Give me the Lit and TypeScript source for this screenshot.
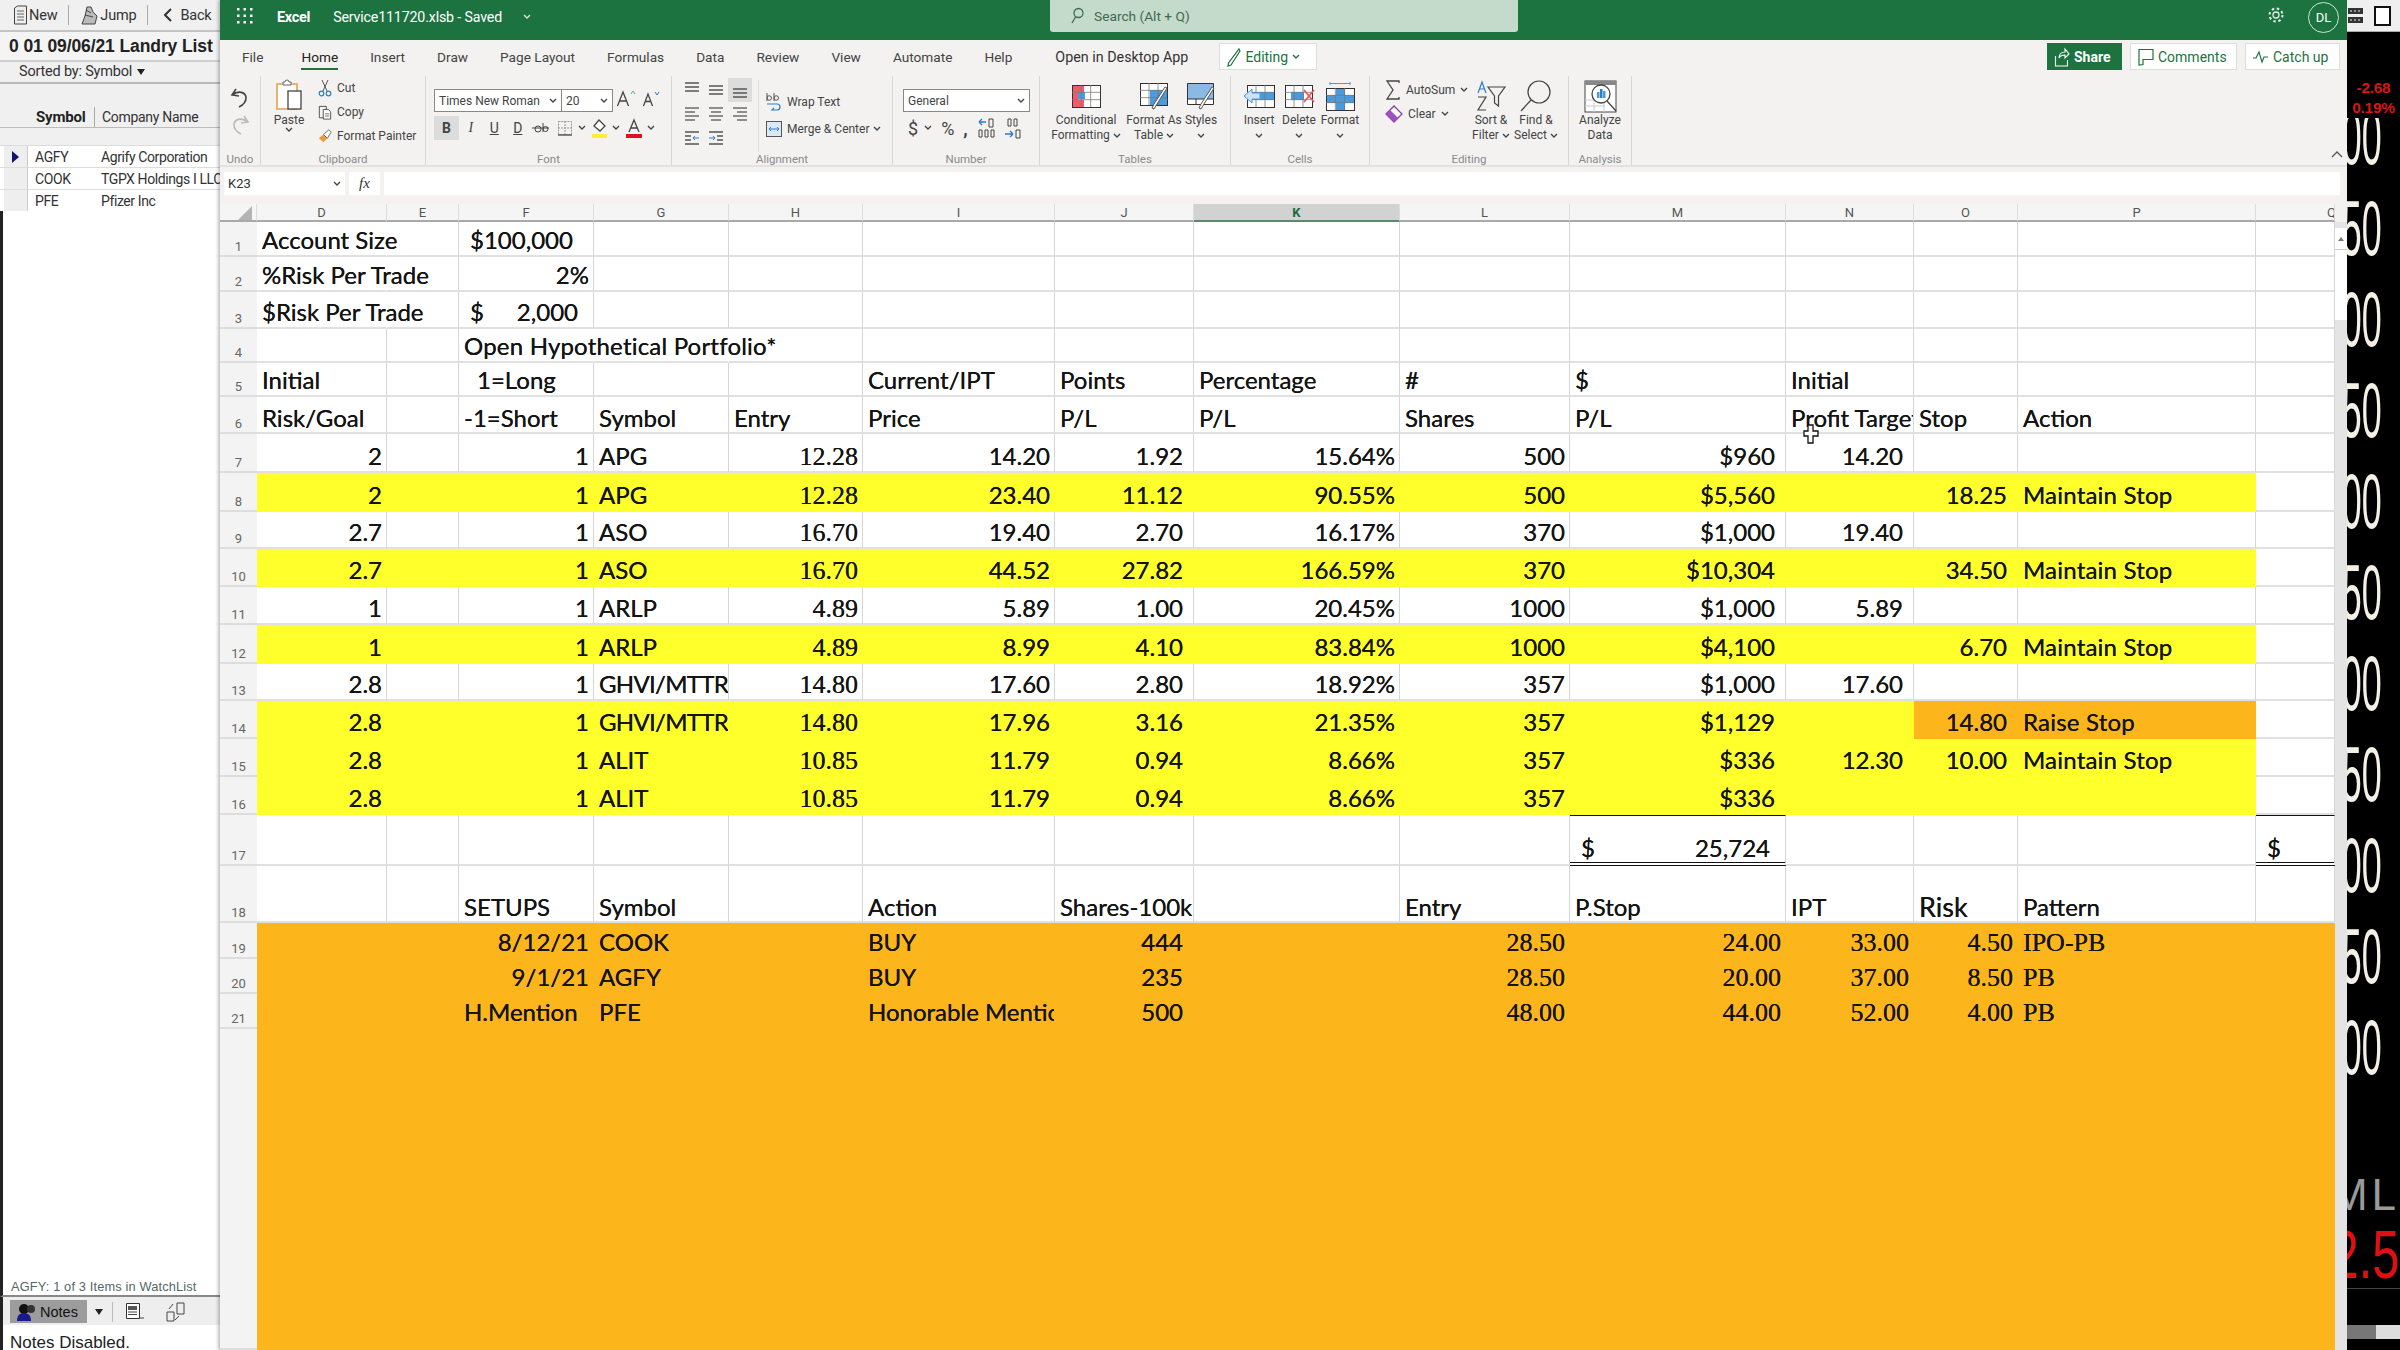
import { LitElement, html, css, svg } from 'lit';
import { customElement } from 'lit/decorators.js';

// cell = [text, classes]
type Cell = [string, string?];
type Row = { n: string; cells: Record<string, Cell> };

const COLS = ['D', 'E', 'F', 'G', 'H', 'I', 'J', 'K', 'L', 'M', 'N', 'O', 'P', 'Q'];
// these rows sit a pixel lower in their cell
const LOW_ROWS = ['6', '17', '18'];

const trade = (
  n: number, fill: string, d: string, sym: string, entry: string, cur: string, pts: string,
  pct: string, shr: string, pl: string, target: string, stop: string, action: string, actFill = '',
): Row => {
  const cells: Record<string, Cell> = {
    D: [d, 'r'], F: ['1', 'r'], G: [sym, sym.length > 6 ? 'l tight' : 'l'], H: [entry, 'r tm'], I: [cur, 'r'], J: [pts, 'rp'],
    K: [pct, 'r'], L: [shr, 'r'], M: [pl, 'rp'], N: [target, 'rp'], O: [stop, `rp ${actFill}`],
    P: [action, `l wide ${actFill}`],
  };
  for (const k of ['D', 'E', 'F', 'G', 'H', 'I', 'J', 'K', 'L', 'M', 'N', 'O', 'P']) {
    if (!cells[k]) cells[k] = ['', ''];
    if (!cells[k][1]?.includes('fo')) cells[k][1] = `${cells[k][1]} ${fill}`;
  }
  return { n: String(n), cells };
};

const setup = (n: number, f: string, fc: string, sym: string, act: string, shr: string, en: string, st: string, ipt: string, risk: string, pat: string): Row => {
  const cells: Record<string, Cell> = {
    D: ['', 'fo'], E: ['', 'fo'], F: [f, fc + ' fo'], G: [sym, 'l fo'], H: ['', 'fo'], I: [act, 'l fo'], J: [shr, 'rp fo'],
    K: ['', 'fo'], L: [en, 'r tm fo'], M: [st, 'r tm fo'], N: [ipt, 'r tm fo'], O: [risk, 'r tm fo'], P: [pat, 'l tm fo'], Q: ['', 'fo'],
  };
  return { n: String(n), cells };
};

const ROWS: Row[] = [
  { n: '1', cells: { D: ['Account Size', 'l over nob'], F: ['$100,000', 'l11'] } },
  { n: '2', cells: { D: ['%Risk Per Trade', 'l over nob'], F: ['2%', 'r'] } },
  { n: '3', cells: { D: ['$Risk Per Trade', 'l over nob'], F: ['$|2,000', 'acct'] } },
  { n: '4', cells: { F: ['Open Hypothetical Portfolio*', 'l over nob wide'], G: ['', 'nob'], H: ['', ''] } },
  { n: '5', cells: { D: ['Initial', 'l'], F: ['1=Long', 'l18'], I: ['Current/IPT', 'l'], J: ['Points', 'l'], K: ['Percentage', 'l'], L: ['#', 'l'], M: ['$', 'l'], N: ['Initial', 'l'] } },
  { n: '6', cells: { D: ['Risk/Goal', 'l'], F: ['-1=Short', 'l'], G: ['Symbol', 'l'], H: ['Entry', 'l'], I: ['Price', 'l'], J: ['P/L', 'l'], K: ['P/L', 'l'], L: ['Shares', 'l'], M: ['P/L', 'l'], N: ['Profit Target', 'l'], O: ['Stop', 'l'], P: ['Action', 'l'] } },
  trade(7, '', '2', 'APG', '12.28', '14.20', '1.92', '15.64%', '500', '$960', '14.20', '', ''),
  trade(8, 'fy', '2', 'APG', '12.28', '23.40', '11.12', '90.55%', '500', '$5,560', '', '18.25', 'Maintain Stop'),
  trade(9, '', '2.7', 'ASO', '16.70', '19.40', '2.70', '16.17%', '370', '$1,000', '19.40', '', ''),
  trade(10, 'fy', '2.7', 'ASO', '16.70', '44.52', '27.82', '166.59%', '370', '$10,304', '', '34.50', 'Maintain Stop'),
  trade(11, '', '1', 'ARLP', '4.89', '5.89', '1.00', '20.45%', '1000', '$1,000', '5.89', '', ''),
  trade(12, 'fy', '1', 'ARLP', '4.89', '8.99', '4.10', '83.84%', '1000', '$4,100', '', '6.70', 'Maintain Stop'),
  trade(13, '', '2.8', 'GHVI/MTTR', '14.80', '17.60', '2.80', '18.92%', '357', '$1,000', '17.60', '', ''),
  trade(14, 'fy', '2.8', 'GHVI/MTTR', '14.80', '17.96', '3.16', '21.35%', '357', '$1,129', '', '14.80', 'Raise Stop', 'fo'),
  trade(15, 'fy', '2.8', 'ALIT', '10.85', '11.79', '0.94', '8.66%', '357', '$336', '12.30', '10.00', 'Maintain Stop'),
  trade(16, 'fy', '2.8', 'ALIT', '10.85', '11.79', '0.94', '8.66%', '357', '$336', '', '', ''),
  { n: '17', cells: { M: ['$|25,724', 'acct total'], Q: ['$', 'l11 total'] } },
  { n: '18', cells: { F: ['SETUPS', 'l'], G: ['Symbol', 'l'], I: ['Action', 'l'], J: ['Shares-100k', 'l'], L: ['Entry', 'l'], M: ['P.Stop', 'l'], N: ['IPT', 'l'], O: ['Risk', 'l lg'], P: ['Pattern', 'l'] } },
  setup(19, '8/12/21', 'r', 'COOK', 'BUY', '444', '28.50', '24.00', '33.00', '4.50', 'IPO-PB'),
  setup(20, '9/1/21', 'r', 'AGFY', 'BUY', '235', '28.50', '20.00', '37.00', '8.50', 'PB'),
  setup(21, 'H.Mention', 'l', 'PFE', 'Honorable Mention', '500', '48.00', '44.00', '52.00', '4.00', 'PB'),
  { n: '', cells: Object.fromEntries(COLS.map((k) => [k, ['', 'fo'] as Cell])) },
];

const chev = (c = '#444') => html`<svg class="chev" width="8" height="6" viewBox="0 0 8 6"><path d="M1 1l3 3 3-3" fill="none" stroke=${c} stroke-width="1.4"/></svg>`;
const ic = (w: number, h: number, body: unknown) => html`<svg width=${w} height=${h} viewBox="0 0 ${w} ${h}">${body}</svg>`;

const gridBase = (x: number, y: number, w: number, h: number, c = '#333') => svg`
  <rect x=${x + 0.5} y=${y + 0.5} width=${w} height=${h} fill="none" stroke=${c}/>
  <path d="M${x} ${y + h / 3}h${w}M${x} ${y + (2 * h) / 3}h${w}M${x + w / 3} ${y}v${h}M${x + (2 * w) / 3} ${y}v${h}" stroke="#777" stroke-width=".8"/>`;

const ICONS = {
  undo: ic(22, 24, svg`<path d="M7 3L3 9l7 1M3.500 9C9 4 17 6 17 12c0 4-3 7-7 9" fill="none" stroke="#444" stroke-width="1.6"/>`),
  redo: ic(22, 24, svg`<path d="M15 3l4 6-7 1M18.500 9C13 4 5 6 5 12c0 4 3 7 7 9" fill="none" stroke="#bbb" stroke-width="1.6"/>`),
  paste: ic(28, 31, svg`<path d="M2 5h20v25H2z" fill="#fff" stroke="#e8a04a" stroke-width="1.600"/><path d="M8 6V3h2a2 2 0 014 0h2v3z" fill="#fff" stroke="#666"/><rect x="13" y="12" width="13" height="18" fill="#fff" stroke="#444" stroke-width="1.300"/>`),
  cut: ic(14, 18, svg`<path d="M4 1l5 11M10 1L5 12" stroke="#555" fill="none"/><circle cx="3.500" cy="14.500" r="2.300" fill="none" stroke="#2b7cd3" stroke-width="1.200"/><circle cx="10.500" cy="14.500" r="2.300" fill="none" stroke="#2b7cd3" stroke-width="1.200"/>`),
  copy: ic(16, 17, svg`<path d="M1.500 1.500h8v13h-8z" fill="none" stroke="#444"/><path d="M6 5h6l2.500 3v8H6z" fill="#fff" stroke="#444"/><path d="M8 10h5M8 12.500h5" stroke="#666"/>`),
  painter: ic(18, 18, svg`<path d="M1 12l6-5 5 5-5 5z" fill="#ec9a3c"/><path d="M7 7l7-6 3 3-5 8z" fill="#fff" stroke="#555"/>`),
  grow: ic(22, 20, svg`<path d="M1.500 17L7 3l5.500 14M3.500 12h7" fill="none" stroke="#444" stroke-width="1.300"/><path d="M15 5l2-3 2 3" fill="none" stroke="#6aa"/>`),
  shrink: ic(22, 20, svg`<path d="M2.500 17L7 5l4.500 12M4 12.500h6" fill="none" stroke="#444" stroke-width="1.300"/><path d="M14 3l2 3 2-3" fill="none" stroke="#2b7cd3"/>`),
  strike: ic(18, 16, svg`<circle cx="6" cy="9" r="3" fill="none" stroke="#444"/><path d="M11 3v9M11 9a2.500 2.500 0 015 0 2.500 2.500 0 01-5 0M0 8h17" fill="none" stroke="#444"/>`),
  border: ic(16, 16, svg`<path d="M1.500 1.500h13v13h-13z" fill="none" stroke="#999" stroke-dasharray="2 1"/><path d="M8 1v14M1 8h14" stroke="#999" stroke-dasharray="2 1"/><path d="M1 15h14" stroke="#555" stroke-width="1.400"/>`),
  fill: ic(18, 20, svg`<path d="M9 2l6 6-5 5-6-5z" fill="#fff" stroke="#444" stroke-width="1.300"/><path d="M2 16h15v4H2z" fill="#ffee2e"/>`),
  color: ic(18, 20, svg`<path d="M4 14L9 2l5 12M5.500 10h7" fill="none" stroke="#444" stroke-width="1.300"/><path d="M1 16h16v4H1z" fill="#e0101e"/>`),
  wrap: ic(18, 22, svg`<path d="M2 2v8M2 7a2.200 2.200 0 014.500 0 2.200 2.200 0 01-4.500 0M9 2v8M9 7a2.200 2.200 0 014.500 0 2.200 2.200 0 01-4.500 0" fill="none" stroke="#555"/><path d="M2 13h10a3 3 0 010 6H7l2-2" fill="none" stroke="#2b7cd3" stroke-width="1.200"/>`),
  merge: ic(18, 18, svg`<rect x="1.500" y="1.500" width="15" height="15" fill="#dbe9f6" stroke="#555"/><path d="M4 9h10M4 9l2-2M4 9l2 2M14 9l-2-2M14 9l-2 2" fill="none" stroke="#2b7cd3"/>`),
  inc: ic(18, 22, svg`<path d="M9 5H2M2 5l3-3M2 5l3 3" fill="none" stroke="#2b7cd3" stroke-width="1.300"/><path d="M12 2h4v8h-4zM2 13h3v7H2zM8 13h3v7H8zM14 13h3v7h-3z" fill="none" stroke="#444"/>`),
  dec: ic(18, 22, svg`<path d="M4 2h3v7H4zM10 2h3v7h-3z" fill="none" stroke="#444"/><path d="M1 17h8M9 17l-3-3M9 17l-3 3" fill="none" stroke="#2b7cd3" stroke-width="1.300"/><path d="M12 13h4v8h-4z" fill="none" stroke="#444"/>`),
  cond: ic(30, 24, svg`<rect x="1" y="1" width="28" height="22" fill="#fff"/><rect x="1" y="1" width="12" height="7" fill="#ef5b6b"/><rect x="1" y="16" width="12" height="7" fill="#ef5b6b"/><rect x="1" y="8" width="6" height="8" fill="#ef5b6b"/><rect x="7" y="8" width="7" height="7" fill="#4a9ade"/>${gridBase(1, 1, 28, 22)}`),
  table: ic(30, 28, svg`<rect x="1" y="1" width="27" height="22" fill="#fff"/><rect x="11" y="8" width="17" height="15" fill="#4a9ade"/>${gridBase(1, 1, 27, 22)}<path d="M28 6L18 22l-3 5-2-1 2-4 11-17z" fill="#fff" stroke="#555"/>`),
  styles: ic(30, 28, svg`<rect x="1" y="1" width="27" height="22" fill="#fff"/><rect x="1" y="1" width="27" height="16" fill="#8ab9e6"/><path d="M1.500 1.500h26v21h-26zM10 17v6M1 17h27" fill="none" stroke="#333"/><path d="M28 6L18 22l-3 5-2-1 2-4 11-17z" fill="#fff" stroke="#555"/>`),
  insert: ic(32, 24, svg`<rect x="4" y="1" width="27" height="22" fill="#fff"/><rect x="4" y="8" width="27" height="8" fill="#4a9ade"/>${gridBase(4, 1, 27, 22)}<path d="M1 12l8-7v4h8v6H9v4z" fill="#cfe3f5" stroke="#4a9ade"/>`),
  del: ic(32, 24, svg`<rect x="2" y="1" width="27" height="22" fill="#fff"/><rect x="8" y="8" width="13" height="8" fill="#4a9ade"/>${gridBase(2, 1, 27, 22)}<path d="M21 6l10 12M31 6L21 18" stroke="#e8505b" stroke-width="1.600"/>`),
  format: ic(30, 29, svg`<path d="M5 1.500h20M5 0v3M25 0v3" stroke="#4a9ade"/><rect x="1" y="6" width="28" height="22" fill="#fff"/><rect x="11" y="6" width="9" height="22" fill="#4a9ade"/><rect x="1" y="13" width="28" height="8" fill="#4a9ade"/>${gridBase(1, 6, 28, 22)}`),
  sigma: ic(16, 22, svg`<path d="M14 4V2H2l6 9-6 9h12v-2" fill="none" stroke="#444" stroke-width="1.300"/>`),
  clear: ic(18, 18, svg`<path d="M1 9l8-8 8 8-8 8z" fill="#fff" stroke="#8a3fa8" stroke-width="1.300"/><path d="M1 9l4-4 8 8-4 4z" fill="#a24dc0"/>`),
  sort: ic(30, 32, svg`<path d="M2 13l4-11 4 11M3.500 9h5" fill="none" stroke="#2b7cd3" stroke-width="1.200"/><path d="M2 17h8L2 30h8" fill="none" stroke="#444" stroke-width="1.200"/><path d="M12 7h17l-6.500 9v10l-4-3v-7z" fill="none" stroke="#444" stroke-width="1.200"/>`),
  find: ic(34, 34, svg`<circle cx="20" cy="13" r="11" fill="none" stroke="#444" stroke-width="1.200"/><path d="M12 21L2 32" stroke="#444" stroke-width="1.200"/>`),
  analyze: ic(33, 33, svg`<rect x="1" y="1" width="31" height="31" fill="#fff" stroke="#444"/><rect x="1" y="1" width="31" height="4" fill="#888"/><path d="M1 20h20M10 20v12M20 20v12M1 26h20" stroke="#ccc"/><circle cx="17" cy="14" r="9" fill="#fff" stroke="#444" stroke-width="1.300"/><rect x="13" y="12" width="2.500" height="6" fill="#4a9ade"/><rect x="16" y="9" width="2.500" height="9" fill="#2b7cd3"/><rect x="19" y="11" width="2.500" height="7" fill="#4a9ade"/><path d="M23 21l9 10" stroke="#444" stroke-width="1.300"/>`),
};

const alignRow = (lines: number[], offs: number) => html`<span class="al">${ic(
  20, 20, svg`${lines.map((w, i) => svg`<path d="M${3 + (14 - w) * offs} ${4 + i * 4}h${w}" stroke="#555" stroke-width="1.300"/>`)}`,
)}</span>`;

@customElement('app-root')
export class AppRoot extends LitElement {
  static styles = css`
    :host { display: block; width: 2400px; height: 1350px; overflow: hidden; font-family: Roboto, sans-serif; color: #333; }
    .page { display: flex; width: 2400px; height: 1350px; }

    /* watchlist side panel */
    .side { width: 220px; flex: none; display: flex; flex-direction: column; background: #f0f0f0; overflow: hidden; white-space: nowrap; }
    .tools { height: 30px; display: flex; align-items: center; padding-left: 13px; font-size: 14.500px; border-bottom: 2px solid #c4c4c4; color: #333; box-sizing: content-box; letter-spacing: -.2px; }
    .tools .tool { display: flex; align-items: center; gap: 1px; }
    .tools .sep { width: 1px; height: 20px; background: #aaa; margin: 0 11px; }
    .tools .back { gap: 8px; margin-left: 5px; }
    .title { height: 28px; font: bold 17.500px/28px "Liberation Sans", sans-serif; padding-left: 9px; color: #222; border-bottom: 2px solid #d0d0d0; background: #f4f4f4; letter-spacing: -.1px; }
    .sorted { height: 20px; line-height: 22px; padding-left: 19px; font-size: 14.500px; letter-spacing: -.2px; border-bottom: 2px solid #b8b8b8; display: flex; align-items: center; gap: 5px; }
    .tri { width: 0; height: 0; border-left: 4px solid transparent; border-right: 4px solid transparent; border-top: 6px solid #222; }
    .lhead { height: 43px; display: flex; align-items: flex-end; padding: 0 0 0 36px; font-size: 14px; box-sizing: border-box; }
    .lhead b { width: 58px; height: 20px; line-height: 20px; font-size: 15px; border-right: 1px solid #aaa; font-weight: 700; color: #222; margin-right: 7px; flex: none; letter-spacing: -.2px; }
    .lhead span { height: 20px; line-height: 20px; letter-spacing: -.3px; }
    .lgap { height: 18px; border-top: 1px solid #bbb; box-sizing: border-box; }
    .lrow { height: 22px; display: flex; align-items: center; background: #fff; font-size: 14px; letter-spacing: -.4px; border-top: 1px solid #ddd; box-sizing: border-box; }
    .lrow .pick { width: 28px; height: 100%; background: #eee; border-left: 4px solid #fff; box-sizing: border-box; display: flex; align-items: center; justify-content: center; flex: none; border-right: 1px solid #ccc; }
    .lrow .pick i { border-top: 6px solid transparent; border-bottom: 6px solid transparent; border-left: 7px solid #14146e; }
    .lrow .sym { width: 73px; padding-left: 7px; box-sizing: border-box; flex: none; }
    .lblank { flex: 1; background: #fff; border-left: 3px solid #222; }
    .status { height: 21px; background: #fff; border-left: 3px solid #222; padding-left: 8px; font: 12.800px/25px "Liberation Sans", sans-serif; color: #566; letter-spacing: .15px; border-bottom: 2px solid #888; overflow: hidden; }
    .notes { height: 27px; display: flex; align-items: center; background: #eee; border-left: 3px solid #222; padding-left: 7px; padding-top: 1px; }
    .notes .nbtn { width: 77px; height: 23px; background: #9c9c9c; display: flex; align-items: center; gap: 2px; padding-left: 6px; box-sizing: border-box; font: 14.500px "Liberation Sans", sans-serif; color: #111; }
    .notes .tri { margin-left: 8px; }
    .notes .sep { width: 1px; height: 20px; background: #bbb; margin: 0 12px 0 9px; }
    .notes .sp { width: 20px; }
    .disabled { height: 25px; background: #fff; border-left: 3px solid #222; padding: 9px 0 0 7px; box-sizing: border-box; font: 17px/17px "Liberation Sans", sans-serif; color: #222; }

    /* excel window */
    .excel { width: 2127px; flex: none; display: flex; flex-direction: column; background: #f3f2f1; box-shadow: -2px 0 3px rgba(0, 0, 0, .25); z-index: 1; }
    .bar { height: 40px; background: #1c7340; color: #fff; display: flex; align-items: center; white-space: nowrap; flex: none; padding-bottom: 6px; box-sizing: border-box; }
    .waffle { margin-left: 15px; }
    .app { font-size: 14.500px; font-weight: 700; margin-left: 24px; letter-spacing: -.3px; }
    .file { font-size: 14.200px; margin-left: 23px; letter-spacing: -.15px; }
    .bar .chev { margin-left: 21px; }
    .search { width: 468px; height: 32px; margin-top: -2px; margin-left: 519px; background: #c4dacb; border-radius: 0 0 3px 3px; display: flex; align-items: center; padding-left: 20px; gap: 10px; box-sizing: border-box; font-size: 13.700px; color: #3f6a50; }
    .gear { margin-left: auto; }
    .me { width: 31px; height: 31px; border: 1.500px solid #cfe3d6; border-radius: 50%; box-sizing: border-box; display: flex; align-items: center; justify-content: center; font-size: 13px; margin: 0 8px 0 23px; }

    .tabs { height: 35px; display: flex; align-items: center; padding: 0 7px 2px 22px; font-size: 13.650px; gap: 32px; color: #444; white-space: nowrap; flex: none; box-sizing: border-box; }
    .tabs .on { position: relative; color: #222; margin-left: 6px; }
    .tabs .on::after { content: ''; position: absolute; left: 0; right: 0; bottom: -5px; height: 2px; background: #1c7340; }
    .tabs .desk { margin-left: 11px; color: #333; font-size: 14.300px; }
    .btn { height: 27px; background: #fff; border: 1px solid #ddd; display: flex; align-items: center; gap: 4px; padding: 0 7px; box-sizing: border-box; color: #1c7340; font-size: 14px; }
    .tabs .edit { margin-left: -1px; width: 98px; }
    .share { margin-left: auto; width: 75px; background: #1c7340; color: #fff; border: 0; font-weight: 700; }
    .comments { margin-left: -24px; width: 107px; }
    .catch { margin-left: -24px; width: 95px; }

    .ribbon { height: 92px; display: flex; flex: none; border-bottom: 2px solid #e2e2e2; box-sizing: border-box; position: relative; font-size: 12px; color: #444; white-space: nowrap; }
    .grp { display: flex; flex-direction: column; border-right: 1px solid #d6d6d6; box-sizing: border-box; margin-top: 1px; flex: none; }
    .grp .body { flex: 1; display: flex; min-height: 0; padding-top: 3px; }
    .grp .cap { height: 14px; line-height: 16px; text-align: center; font-size: 11.500px; color: #8a8a8a; }
    .w-undo { width: 41px; } .w-clip { width: 165px; } .w-font { width: 246px; } .w-align { width: 221px; }
    .w-num { width: 147px; } .w-tab { width: 191px; } .w-cell { width: 139px; } .w-edit { width: 199px; } .w-an { width: 63px; }
    .grp .undo { flex-direction: column; align-items: center; gap: 3px; padding-top: 10px; width: 100%; }
    .grp .center { justify-content: center; }
    .pastec { width: 40px; margin-left: 8px; display: flex; flex-direction: column; align-items: center; }
    .pastec span { line-height: 14px; margin-top: 3px; }
    .clipr { margin-left: 9px; display: flex; flex-direction: column; gap: 6px; }
    .clipr div { height: 18px; display: flex; align-items: center; gap: 5px; }
    .clipr svg { width: 14px; flex: none; }

    .sel { height: 23px; border: 1px solid #888; background: #fff; box-sizing: border-box; display: flex; align-items: center; font-size: 12px; color: #444; }
    .fontc { margin: 10px 0 0 8px; }
    .fr1 { display: flex; align-items: center; }
    .fname { width: 128px; padding: 0 4px; justify-content: space-between; }
    .fsize { width: 51px; padding: 0 4px; justify-content: space-between; border-left: 0; }
    .fr1 .g { margin-left: 3px; }
    .fr2 { display: flex; align-items: center; height: 24px; margin-top: 4px; font-size: 14px; color: #444; }
    .fr2 .chev { margin: 0 2px 0 1px; }
    .fb { width: 25px; height: 24px; display: flex; align-items: center; justify-content: center; }
    .fb.on { background: #dcdcdc; font-weight: 700; }
    .fb.n { width: 23.500px; }
    .fb.it { font-family: "Liberation Serif", serif; font-style: italic; }
    .fb.un { text-decoration: underline; }

    .grp .alignc { display: flex; padding: 0 0 0 8px; margin-top: 1px; }
    .algrid { display: grid; grid-template-columns: 24px 24px 24px; grid-auto-rows: 24px; align-content: start; margin-top: 1px; }
    .al { display: flex; align-items: center; justify-content: center; }
    .al.hl { background: #dcdcdc; }
    .wrapc { margin-left: 6px; padding-left: 6px; border-left: 1px solid #ddd; height: 72px; display: flex; flex-direction: column; gap: 7px; padding-top: 12px; box-sizing: border-box; margin-top: 3px; }
    .wrapc div { height: 20px; display: flex; align-items: center; gap: 4px; }
    .numc { margin: 10px 0 0 10px; }
    .nsel { width: 127px; padding: 0 4px; justify-content: space-between; }
    .nr2 { display: flex; align-items: center; height: 24px; margin-top: 4px; gap: 9px; font-size: 18px; color: #444; padding-left: 5px; }
    .nr2 .chev { margin-left: -3px; }
    .big { display: flex; flex-direction: column; align-items: center; flex: none; }
    .big .i { height: 34px; display: flex; align-items: center; }
    .big .t { height: 15px; line-height: 15px; display: flex; align-items: center; gap: 3px; }
    .grp .tabsb { padding-left: 0; }
    .b-cond { width: 86px; margin-left: 3px; } .b-fat { width: 50px; } .b-sty { width: 44px; }
    .b-ins { width: 38px; margin-left: 9px; } .b-del { width: 42px; } .b-fmt { width: 40px; }
    .editl { width: 84px; margin-left: 15px; display: flex; flex-direction: column; gap: 2px; }
    .editl div { height: 22px; display: flex; align-items: center; gap: 5px; }
    .b-sort { width: 44px; } .b-find { width: 46px; }
    .collapse { position: absolute; right: 3px; bottom: 4px; }

    .fx { height: 37px; flex: none; display: flex; gap: 4px; padding: 5px 7px 9px 4px; box-sizing: border-box; }
    .fx > div { background: #fff; box-sizing: border-box; }
    .fx .name { width: 121px; display: flex; align-items: center; justify-content: space-between; padding: 0 4px; font-size: 13px; }
    .fx .fn { width: 31px; display: flex; align-items: center; justify-content: center; font: italic 15px "Liberation Serif", serif; }
    .fx .input { flex: 1; }

    /* sheet */
    .sheetwrap { flex: 1; display: flex; min-height: 0; position: relative; }
    .sheet {
      display: grid;
      grid-template-columns: 37px 130px 72px 135px 135px 134px 192px 139px 206px 170px 216px 128px 104px 238px 79px;
      grid-template-rows: 18px 35px 35px 37px 34px 34px 37px 39px 39px 37px 38px 38px 39px 37px 38px 38px 38px 51px 57px 36px 35px 35px 321px;
      width: 2115px; height: 1146px; flex: none; overflow: hidden; background: #fff;
      font-family: Lato, sans-serif; font-size: 24px; color: #141414;
    }
    .ch { background: #f5f5f5; border-bottom: 2px solid #a9a9a9; border-right: 1px solid #dcdcdc; font: 13px/18px Roboto, sans-serif; color: #555; text-align: center; box-sizing: border-box; overflow: hidden; }
    .ch.act { background: #d2d2d2; color: #1c6b3e; font-weight: 700; border-bottom-color: #5a8a6c; }
    .ch.qq { text-align: left; padding-left: 71px; }
    .ch.corner { display: flex; justify-content: flex-end; align-items: flex-end; padding: 0 3px 0 0; }
    .rh { background: #f3f3f3; border-bottom: 2px solid #ddd; font: 13px/15px Roboto, sans-serif; color: #666; text-align: center; display: flex; align-items: flex-end; justify-content: center; box-sizing: border-box; padding-bottom: 1px; }
    .c { box-sizing: border-box; border-right: 1px solid #d6d6d6; border-bottom: 2px solid #e0e0e0; display: flex; align-items: flex-end; white-space: nowrap; overflow: hidden; padding-bottom: 1px; line-height: 28px; text-shadow: 0 0 .4px #141414; }
    .c.low { padding-bottom: 0; }
    .c.over { overflow: visible; }
    .c.nob { border-right-color: transparent; }
    .c.l { padding-left: 5px; }
    .c.l11 { padding-left: 11px; }
    .c.l18 { padding-left: 18px; }
    .c.r { justify-content: flex-end; padding-right: 4px; }
    .c.rp { justify-content: flex-end; padding-right: 10px; }
    .c.tm { font-family: "Liberation Serif", serif; font-size: 26px; padding-bottom: 0; }
    .c.lg { font-size: 27px; }
    .c.tight { letter-spacing: -.7px; }
    .c.wide { letter-spacing: .2px; }
    .c.acct { justify-content: space-between; padding-left: 11px; padding-right: 15px; }
    .c.total { border-bottom: 4px double #111; border-top: 1px solid #111; }
    .c.fy { background: #ffff2b; border-color: #ffff2b; }
    .c.fo { background: #fcb61b; border-color: #fcb61b; }
    .scroll { width: 12px; flex: none; margin-top: 18px; background: #e4e4e4; display: flex; flex-direction: column; }
    .scroll .up { height: 21px; margin-top: 6px; background: #fff; display: flex; align-items: center; justify-content: center; border-bottom: 1px solid #ccc; }
    .scroll .up i { border-left: 3px solid transparent; border-right: 3px solid transparent; border-bottom: 4px solid #777; }
    .scroll .thumb { height: 70px; background: #fff; }
    .cursor { position: absolute; left: 1583px; top: 220px; }

    /* chart window peeking out on the right */
    .chart { flex: 1; background: #000; display: flex; flex-direction: column; overflow: hidden; white-space: nowrap; font-family: "Liberation Sans", sans-serif; }
    .ctop { height: 32px; background: #efefef; display: flex; align-items: center; gap: 10px; padding-left: 1px; flex: none; border-bottom: 1px solid #aaa; box-sizing: border-box; }
    .ctop .bx { width: 17px; height: 20px; background: #fff; border: 2px solid #111; box-sizing: border-box; }
    .stats { height: 86px; flex: none; box-sizing: border-box; padding-top: 46px; text-align: center; color: #d71515; font-weight: 700; font-size: 15.500px; line-height: 20px; letter-spacing: -.3px; position: relative; z-index: 1; background: #000; }
    .axis { height: 1058px; flex: none; overflow: hidden; }
    .axis div { height: 91px; line-height: 91px; display: flex; justify-content: flex-end; padding-right: 18px; font-size: 78px; color: #f4f0e8; }
    .axis div:first-child { margin-top: -26px; }
    .axis span { display: inline-block; transform: scaleX(.46); transform-origin: right center; flex: none; }
    .foot { height: 174px; flex: none; overflow: hidden; }
    .ml { height: 38px; display: flex; justify-content: flex-end; color: #9a9a9a; font-size: 44px; line-height: 38px; letter-spacing: 4px; overflow: hidden; }
    .red { height: 52px; margin-top: 14px; display: flex; justify-content: flex-end; color: #e01010; font-size: 68px; line-height: 52px; overflow: hidden; }
    .red span { display: inline-block; flex: none; transform: scaleX(.72); transform-origin: right center; }
    .cline { height: 1px; background: #444; margin-top: 8px; }
    .cscroll { height: 14px; margin-top: 36px; background: #777; display: flex; justify-content: flex-end; }
    .cscroll i { width: 24px; background: #ddd; }
  `;

  private renderRibbon() {
    return html`<div class="ribbon">
      <div class="grp w-undo"><div class="body undo">${ICONS.undo}${ICONS.redo}</div><div class="cap">Undo</div></div>

      <div class="grp w-clip">
        <div class="body">
          <div class="pastec">${ICONS.paste}<span>Paste</span>${chev()}</div>
          <div class="clipr">
            <div>${ICONS.cut}Cut</div>
            <div>${ICONS.copy}Copy</div>
            <div>${ICONS.painter}Format Painter</div>
          </div>
        </div>
        <div class="cap">Clipboard</div>
      </div>

      <div class="grp w-font">
        <div class="body"><div class="fontc">
          <div class="fr1">
            <div class="sel fname">Times New Roman ${chev()}</div>
            <div class="sel fsize">20 ${chev()}</div>
            <span class="g">${ICONS.grow}</span><span class="g">${ICONS.shrink}</span>
          </div>
          <div class="fr2">
            <span class="fb on">B</span><span class="fb n it">I</span><span class="fb n un">U</span><span class="fb n un">D</span>
            <span class="fb n">${ICONS.strike}</span><span class="fb n">${ICONS.border}</span>${chev()}
            <span class="fb n">${ICONS.fill}</span>${chev()}
            <span class="fb n">${ICONS.color}</span>${chev()}
          </div>
        </div></div>
        <div class="cap">Font</div>
      </div>

      <div class="grp w-align">
        <div class="body alignc">
          <div class="algrid">
            <span class="al">${ic(20, 20, svg`<path d="M3 3h14M3 7h14M3 11h14" stroke="#555" stroke-width="1.300"/>`)}</span>
            <span class="al">${ic(20, 20, svg`<path d="M3 6h14M3 10h14M3 14h14" stroke="#555" stroke-width="1.300"/>`)}</span>
            <span class="al hl">${ic(20, 20, svg`<path d="M3 9h14M3 13h14M3 17h14" stroke="#555" stroke-width="1.300"/>`)}</span>
            ${alignRow([14, 10, 14, 10], 0)}${alignRow([14, 10, 14, 10], 0.5)}${alignRow([14, 10, 14, 10], 1)}
            <span class="al">${ic(20, 20, svg`<path d="M3 4h14M3 16h14M3 8h6M3 12h6" stroke="#555" stroke-width="1.300"/><path d="M11 10h6M11 10l2-2M11 10l2 2" fill="none" stroke="#2b7cd3"/>`)}</span>
            <span class="al">${ic(20, 20, svg`<path d="M3 4h14M3 16h14M11 8h6M11 12h6" stroke="#555" stroke-width="1.300"/><path d="M3 10h6M9 10l-2-2M9 10l-2 2" fill="none" stroke="#2b7cd3"/>`)}</span>
          </div>
          <div class="wrapc">
            <div>${ICONS.wrap}Wrap Text</div>
            <div>${ICONS.merge}Merge &amp; Center ${chev()}</div>
          </div>
        </div>
        <div class="cap">Alignment</div>
      </div>

      <div class="grp w-num">
        <div class="body"><div class="numc">
          <div class="sel nsel">General ${chev()}</div>
          <div class="nr2"><span>$</span>${chev()}<span>%</span><b>,</b>${ICONS.inc}${ICONS.dec}</div>
        </div></div>
        <div class="cap">Number</div>
      </div>

      <div class="grp w-tab">
        <div class="body tabsb">
          <div class="big b-cond"><span class="i">${ICONS.cond}</span><span class="t">Conditional</span><span class="t">Formatting ${chev()}</span></div>
          <div class="big b-fat"><span class="i">${ICONS.table}</span><span class="t">Format As</span><span class="t">Table ${chev()}</span></div>
          <div class="big b-sty"><span class="i">${ICONS.styles}</span><span class="t">Styles</span><span class="t">${chev()}</span></div>
        </div>
        <div class="cap">Tables</div>
      </div>

      <div class="grp w-cell">
        <div class="body">
          <div class="big b-ins"><span class="i">${ICONS.insert}</span><span class="t">Insert</span><span class="t">${chev()}</span></div>
          <div class="big b-del"><span class="i">${ICONS.del}</span><span class="t">Delete</span><span class="t">${chev()}</span></div>
          <div class="big b-fmt"><span class="i">${ICONS.format}</span><span class="t">Format</span><span class="t">${chev()}</span></div>
        </div>
        <div class="cap">Cells</div>
      </div>

      <div class="grp w-edit">
        <div class="body">
          <div class="editl">
            <div>${ICONS.sigma}AutoSum ${chev()}</div>
            <div>${ICONS.clear}Clear ${chev()}</div>
          </div>
          <div class="big b-sort"><span class="i">${ICONS.sort}</span><span class="t">Sort &amp;</span><span class="t">Filter ${chev()}</span></div>
          <div class="big b-find"><span class="i">${ICONS.find}</span><span class="t">Find &amp;</span><span class="t">Select ${chev()}</span></div>
        </div>
        <div class="cap">Editing</div>
      </div>

      <div class="grp w-an">
        <div class="body center">
          <div class="big"><span class="i">${ICONS.analyze}</span><span class="t">Analyze</span><span class="t">Data</span></div>
        </div>
        <div class="cap">Analysis</div>
      </div>

      <span class="collapse">${ic(14, 8, svg`<path d="M2 7l5-5 5 5" fill="none" stroke="#555" stroke-width="1.300"/>`)}</span>
    </div>`;
  }

  private renderCell(row: Row, col: string) {
    const [text, cls] = row.cells[col] ?? ['', ''];
    const low = LOW_ROWS.includes(row.n) ? 'low' : '';
    if (text.includes('|')) {
      const [a, b] = text.split('|');
      return html`<div class="c ${cls} ${low}"><span>${a}</span><span>${b}</span></div>`;
    }
    return html`<div class="c ${cls} ${low}">${text}</div>`;
  }

  private renderSheet() {
    return html`<div class="sheet">
      <div class="ch corner">${ic(15, 14, svg`<path d="M14 0v14H0z" fill="#b4b4b4"/>`)}</div>
      ${COLS.map((k) => html`<div class="ch ${k === 'K' ? 'act' : ''} ${k === 'Q' ? 'qq' : ''}">${k}</div>`)}
      ${ROWS.map((r) => html`<div class="rh">${r.n}</div>${COLS.map((k) => this.renderCell(r, k))}`)}
    </div>`;
  }

  render() {
    const axis = ['00', '50', '00', '50', '00', '50', '00', '50', '00', '50', '00'];
    return html`<div class="page">
      <div class="side">
        <div class="tools">
          <span class="tool">${ic(15, 20, svg`<path d="M1.500 3l3-2h9v18h-12z" fill="#eee" stroke="#444"/><path d="M4 6h7M4 9h7M4 12h7M4 15h7" stroke="#666"/>`)}New</span>
          <span class="sep"></span>
          <span class="tool">${ic(19, 22, svg`<path d="M2 20l3-8 2-9h4l2 5 4 4-2 8z" fill="#bbb" stroke="#444"/><path d="M6 6l5 3M5 11l8 2" stroke="#444"/>`)}Jump</span>
          <span class="sep"></span>
          <span class="tool back">${ic(8, 14, svg`<path d="M7 1L1 7l6 6" fill="none" stroke="#333" stroke-width="2"/>`)}Back</span>
        </div>
        <div class="title">0 01 09/06/21 Landry List</div>
        <div class="sorted">Sorted by: Symbol <i class="tri"></i></div>
        <div class="lhead"><b>Symbol</b><span>Company Name</span></div>
        <div class="lgap"></div>
        <div class="lrow"><span class="pick"><i></i></span><span class="sym">AGFY</span><span>Agrify Corporation</span></div>
        <div class="lrow"><span class="pick"></span><span class="sym">COOK</span><span>TGPX Holdings I LLC</span></div>
        <div class="lrow"><span class="pick"></span><span class="sym">PFE</span><span>Pfizer Inc</span></div>
        <div class="lblank"></div>
        <div class="status">AGFY: 1 of 3 Items in WatchList</div>
        <div class="notes">
          <span class="nbtn">${ic(22, 20, svg`<circle cx="8" cy="7" r="5" fill="#111"/><circle cx="15" cy="7" r="4" fill="#333"/><path d="M1 19c0-6 3-8 7-8s7 2 7 8z" fill="#1a1a8a"/>`)}Notes</span>
          <i class="tri"></i><span class="sep"></span>
          ${ic(20, 20, svg`<path d="M1.500 1.500h13v15h-13z" fill="#fff" stroke="#333"/><path d="M3 4h9v4H3z" fill="#555"/><path d="M3 10h9M3 12.500h9M14 16h5" stroke="#444"/>`)}
          <span class="sp"></span>
          ${ic(22, 22, svg`<path d="M12 2h7v11h-7zM2 11h7v9H2z" fill="#eee" stroke="#444"/><path d="M4 8l4-5M14 15l-4 4" stroke="#444"/>`)}
        </div>
        <div class="disabled">Notes Disabled.</div>
      </div>

      <div class="excel">
        <div class="bar">
          <span class="waffle">${ic(18, 18, svg`${[2, 8.5, 15].flatMap((y) => [2, 8.5, 15].map((x) => svg`<rect x=${x} y=${y} width="2.500" height="2.500" fill="#fff"/>`))}`)}</span>
          <span class="app">Excel</span>
          <span class="file">Service111720.xlsb - Saved</span>
          ${chev('#d8e8dd')}
          <div class="search">${ic(14, 18, svg`<circle cx="8.500" cy="6" r="4.500" fill="none" stroke="#3f6a50" stroke-width="1.300"/><path d="M5.500 10L2 16" stroke="#3f6a50" stroke-width="1.300"/>`)}Search (Alt + Q)</div>
          <span class="gear">${ic(18, 20, svg`<circle cx="9" cy="10" r="3" fill="none" stroke="#dfeee4" stroke-width="1.300"/><circle cx="9" cy="10" r="6.500" fill="none" stroke="#dfeee4" stroke-width="2" stroke-dasharray="2.500 2.600"/>`)}</span>
          <span class="me">DL</span>
        </div>

        <div class="tabs">
          <span>File</span><span class="on">Home</span><span>Insert</span><span>Draw</span><span>Page Layout</span><span>Formulas</span><span>Data</span><span>Review</span><span>View</span><span>Automate</span><span>Help</span>
          <span class="desk">Open in Desktop App</span>
          <span class="btn edit">${ic(14, 20, svg`<path d="M12 2l1 2L4 18l-3 1 .5-3z" fill="none" stroke="#1c7340" stroke-width="1.200"/>`)}Editing ${chev('#1c7340')}</span>
          <span class="btn share">${ic(16, 20, svg`<path d="M1.500 9v10h12v-6M5 11c0-4 3-6 6-6V2l4 5-4 4V8c-3 0-5 1-6 3z" fill="none" stroke="#fff" stroke-width="1.100"/>`)}Share</span>
          <span class="btn comments">${ic(16, 18, svg`<path d="M1 1.500h14v10H5v5L1 17z" fill="none" stroke="#1c7340" stroke-width="1.200"/>`)}Comments</span>
          <span class="btn catch">${ic(16, 14, svg`<path d="M0 8h3l3-6 3 10 2-5h4" fill="none" stroke="#1c7340" stroke-width="1.200"/>`)}Catch up</span>
        </div>

        ${this.renderRibbon()}

        <div class="fx">
          <div class="name">K23 ${chev()}</div>
          <div class="fn">fx</div>
          <div class="input"></div>
        </div>

        <div class="sheetwrap">
          ${this.renderSheet()}
          <div class="scroll"><div class="up"><i></i></div><div class="thumb"></div></div>
          <svg class="cursor" width="16" height="20" viewBox="0 0 16 20"><path d="M5 1h5v6h5v5h-5v7H5v-7H1V7h4z" fill="#fff" stroke="#111" stroke-width="1.300"/></svg>
        </div>
      </div>

      <div class="chart">
        <div class="ctop">${ic(16, 20, svg`<path d="M0 2h15v6H0zM0 11h15v6H0z" fill="#333"/><path d="M2 5h11M2 14h11" stroke="#eee" stroke-dasharray="2 2"/>`)}<span class="bx"></span></div>
        <div class="stats">-2.68<br />0.19%</div>
        <div class="axis">${axis.map((t) => html`<div><span>${t}</span></div>`)}</div>
        <div class="foot">
          <div class="ml"><span>ML</span></div>
          <div class="red"><span>2.5</span></div>
          <div class="cline"></div>
          <div class="cscroll"><i></i></div>
        </div>
      </div>
    </div>`;
  }
}
